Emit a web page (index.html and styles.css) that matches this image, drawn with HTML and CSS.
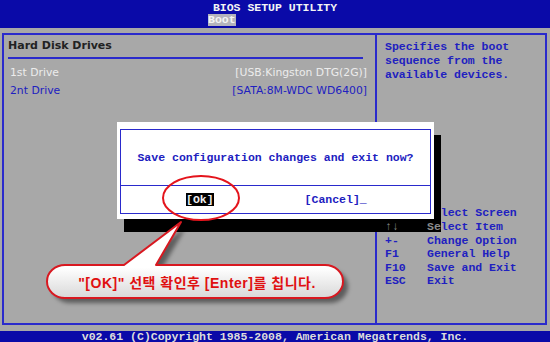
FILE: index.html
```html
<!DOCTYPE html>
<html lang="ko">
<head>
    <meta charset="UTF-8">
    <meta name="viewport" content="width=device-width, initial-scale=1.0">
    <title>BIOS Setup Utility - Boot</title>
    <link rel="stylesheet" href="styles.css">
</head>
<body>
    <div class="screen">
        <header class="topbar">
            <div class="title">BIOS SETUP UTILITY</div>
            <div class="tabs"><span class="tab">Boot</span></div>
        </header>

        <main class="main">
            <div class="frame">
                <section class="menu">
                    <h2 class="menu-title">Hard Disk Drives</h2>
                    <div class="item item-dim"><span>1st Drive</span><span>[USB:Kingston DTG(2G)]</span></div>
                    <div class="item"><span>2nt Drive</span><span>[SATA:8M-WDC WD6400]</span></div>
                </section>
                <aside class="help">
                    <p class="help-text">Specifies the boot<br>sequence from the<br>available devices.</p>
                    <div class="keys">
                        <div class="key-row"><span class="key">&larr;&rarr;</span><span>Select Screen</span></div>
                        <div class="key-row key-row-shaded"><span class="key dim">&uarr;&darr;</span><span><span class="dim">Se</span>lect Item</span></div>
                        <div class="key-row"><span class="key">+-</span><span>Change Option</span></div>
                        <div class="key-row"><span class="key">F1</span><span>General Help</span></div>
                        <div class="key-row"><span class="key">F10</span><span>Save and Exit</span></div>
                        <div class="key-row"><span class="key">ESC</span><span>Exit</span></div>
                    </div>
                </aside>
            </div>
        </main>

        <footer class="footer">v02.61 (C)Copyright 1985-2008, American Megatrends, Inc.</footer>

        <div class="dialog">
            <div class="dialog-box">
                <div class="dialog-message">Save configuration changes and exit now?</div>
                <div class="dialog-buttons">
                    <span class="btn btn-selected">[Ok]</span>
                    <span class="btn">[Cancel]<span class="cursor">_</span></span>
                </div>
            </div>
        </div>

        <!-- annotation drawn over the screenshot -->
        <svg class="callout" width="550" height="342" viewBox="0 0 550 342">
            <defs>
                <linearGradient id="bubbleFill" x1="0" y1="0" x2="0" y2="1">
                    <stop offset="0" stop-color="#ffffff"/>
                    <stop offset="0.6" stop-color="#ffffff"/>
                    <stop offset="1" stop-color="#d8d8d8"/>
                </linearGradient>
                <filter id="soft" x="-10%" y="-10%" width="120%" height="130%">
                    <feGaussianBlur stdDeviation="2"/>
                </filter>
            </defs>
            <ellipse cx="201" cy="198" rx="38" ry="22" fill="none" stroke="#e4141c" stroke-width="2"/>
            <path class="bubble-shadow" filter="url(#soft)"
                  d="M70 270 L129 270 L186 227 L161 270 L330 270 A18 16.5 0 0 1 330 303 L70 303 A18 16.5 0 0 1 70 270 Z"/>
            <path d="M65 265 L124 265 L181 222 L156 265 L325 265 A18 16.5 0 0 1 325 298 L65 298 A18 16.5 0 0 1 65 265 Z"
                  fill="url(#bubbleFill)" stroke="#d81820" stroke-width="2" stroke-linejoin="round"/>
            <text class="callout-text" x="197" y="288" text-anchor="middle">"[OK]" 선택 확인후 [Enter]를 칩니다.</text>
        </svg>
    </div>
</body>
</html>
```

FILE: styles.css
```css
body {
    margin: 0;
    background: #a8a8a8;
    font-family: "Liberation Mono", "DejaVu Sans Mono", monospace;
}
.screen {
    position: relative;
    width: 550px;
    height: 342px;
    display: flex;
    flex-direction: column;
    overflow: hidden;
    background: #a8a8a8;
}
.topbar {
    height: 28px;
    background: #0a0aa8;
    color: #f4f4f4;
    font-size: 11.5px;
    font-weight: bold;
}
.title {
    text-align: center;
    line-height: 13px;
    padding-top: 1px;
}
.tabs {
    padding-left: 208px;
    line-height: 11px;
}
.tab {
    display: inline-block;
    background: #b4b4bc;
    color: #f4f4f4;
    height: 12px;
}
.main {
    flex: 1;
    padding: 5px 3px 6px 2px;
    box-sizing: border-box;
    display: flex;
}
.frame {
    flex: 1;
    display: grid;
    grid-template-columns: 371px 1fr;
    border: 2px solid #2a2acc;
}
.menu {
    padding: 0 8px 0 6px;
    font-family: "DejaVu Sans", Verdana, sans-serif;
    font-size: 10.8px;
}
.menu-title {
    margin: 0 4px 0 -2px;
    padding: 3px 0 3px 0;
    line-height: 16px;
    font-size: 11px;
    font-weight: bold;
    color: #222;
    border-bottom: 2px solid #2a2acc;
}
.item {
    display: flex;
    justify-content: space-between;
    line-height: 18px;
    color: #2020c0;
}
.item-dim {
    margin-top: 5px;
    color: #ececec;
}
.help {
    border-left: 2px solid #2a2acc;
    padding: 5px 0 35px 8px;
    display: flex;
    flex-direction: column;
    color: #2020c0;
    font-size: 11.5px;
    font-weight: bold;
}
.help-text {
    margin: 0;
    line-height: 14px;
}
.keys {
    margin-top: auto;
    line-height: 13.6px;
}
.key-row {
    display: flex;
}
.key {
    width: 42px;
}
.key-row-shaded {
    position: relative;
    z-index: 3;
}
.dim {
    color: #8a8a8a;
}
.footer {
    height: 11px;
    background: #0a0aa8;
    color: #dcdcdc;
    font-size: 11.5px;
    font-weight: bold;
    line-height: 12px;
    text-align: center;
    white-space: nowrap;
}
.dialog {
    position: absolute;
    left: 117px;
    top: 122px;
    width: 317px;
    height: 97px;
    box-sizing: border-box;
    padding: 7px 3px 5px 3px;
    background: #ffffff;
    box-shadow: 7px 13px 0 #000;
    z-index: 2;
}
.dialog-box {
    height: 100%;
    box-sizing: border-box;
    border: 1px solid #2a2acc;
    display: flex;
    flex-direction: column;
    color: #2020c0;
    font-size: 11.5px;
    font-weight: bold;
}
.dialog-message {
    height: 55px;
    line-height: 55px;
    text-align: center;
    border-bottom: 1px solid #2a2acc;
}
.dialog-buttons {
    flex: 1;
    display: flex;
    align-items: center;
    gap: 91px;
    padding-left: 65px;
}
.btn {
    line-height: 13px;
}
.btn-selected {
    background: #000;
    color: #f0f0f0;
}
.callout {
    position: absolute;
    left: 0;
    top: 0;
    z-index: 4;
    pointer-events: none;
}
.bubble-shadow {
    fill: rgba(0, 0, 0, 0.45);
}
.callout-text {
    fill: #e01010;
    font-family: "Liberation Sans", "Noto Sans CJK KR", sans-serif;
    font-size: 14px;
    font-weight: bold;
    letter-spacing: 0.5px;
}
```
